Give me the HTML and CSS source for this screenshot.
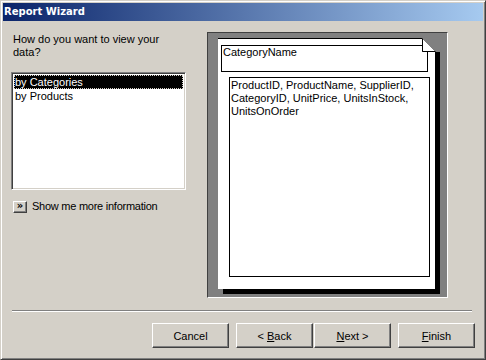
FILE: index.html
```html
<!DOCTYPE html>
<html>
<head>
<meta charset="utf-8">
<link rel="stylesheet" href="styles.css">
</head>
<body>
<div class="window">
  <div class="titlebar"><span class="title">Report Wizard</span></div>
  <div class="main">
    <div class="left">
      <p class="question">How do you want to view your<br>data?</p>
      <div class="listbox">
        <div class="item selected">by Categories</div>
        <div class="item">by Products</div>
      </div>
      <div class="more">
        <span class="more-btn">&raquo;</span>
        <span class="more-text">Show me more information</span>
      </div>
    </div>
    <div class="preview">
      <div class="paper">
        <div class="group-box">CategoryName</div>
        <div class="detail-box">ProductID, ProductName, SupplierID, CategoryID, UnitPrice, UnitsInStock, UnitsOnOrder</div>
        <svg class="fold" width="18" height="14" viewBox="0 0 18 14">
          <rect x="0" y="0" width="18" height="14" fill="#808080"/>
          <polygon points="0,0 13,13 0,13" fill="#ffffff"/>
          <polyline points="0.5,0 0.5,13.5 13.5,13.5" fill="none" stroke="#000" stroke-width="1"/>
          <line x1="0.5" y1="0.5" x2="13" y2="13" stroke="#808080" stroke-width="1"/>
        </svg>
      </div>
    </div>
  </div>
  <div class="separator"></div>
  <div class="buttons">
    <button class="btn">Cancel</button>
    <div class="btn-pair">
      <button class="btn">&lt; <u>B</u>ack</button>
      <button class="btn"><u>N</u>ext &gt;</button>
    </div>
    <button class="btn"><u>F</u>inish</button>
  </div>
</div>
</body>
</html>
```
FILE: styles.css
```css
html, body {
  margin: 0;
  padding: 0;
  background: #d4d0c8;
}
.window {
  width: 486px;
  height: 360px;
  box-sizing: border-box;
  border: 1px solid;
  border-color: #d4d0c8 #404040 #404040 #d4d0c8;
  box-shadow: inset 1px 1px #ffffff, inset -1px -1px #808080;
  padding: 2px;
  background: #d4d0c8;
  font-family: "Liberation Sans", Arial, sans-serif;
  font-size: 11px;
  line-height: 13px;
  color: #000;
}
.titlebar {
  height: 18px;
  background: linear-gradient(to right, #0a246a, #a6caf0);
  display: flex;
  align-items: center;
  padding-left: 1px;
}
.title {
  color: #fff;
  font-family: "DejaVu Sans", sans-serif;
  font-weight: bold;
  font-size: 10px;
  line-height: 14px;
}
.main {
  display: flex;
  padding: 11px 0 0 8px;
}
.left {
  width: 175px;
  display: flex;
  flex-direction: column;
}
.question {
  margin: 1px 0 0 2px;
  line-height: 13px;
}
.listbox {
  margin-top: 13px;
  height: 118px;
  box-sizing: border-box;
  background: #fff;
  border: 1px solid;
  border-color: #808080 #ffffff #ffffff #808080;
  box-shadow: inset 1px 1px #404040, inset -1px -1px #d4d0c8;
  padding: 2px 2px;
}
.item {
  height: 14px;
  line-height: 14px;
  padding-left: 1px;
  white-space: nowrap;
}
.item.selected {
  background: #000;
  color: #fff;
  outline: 1px dotted #d4d0c8;
  outline-offset: -1px;
}
.more {
  margin-top: 10px;
  display: flex;
  align-items: center;
  gap: 5px;
  margin-left: 2px;
}
.more-btn {
  width: 14px;
  height: 12px;
  box-sizing: border-box;
  border: 1px solid;
  border-color: #ffffff #404040 #404040 #ffffff;
  box-shadow: inset -1px -1px #808080;
  font-family: "DejaVu Sans", sans-serif;
  font-weight: bold;
  font-size: 10px;
  line-height: 8px;
  display: flex;
  align-items: center;
  justify-content: center;
  padding-bottom: 1px;
}
.more-text {
  line-height: 13px;
  letter-spacing: -0.25px;
}
.preview {
  margin-left: 21px;
  width: 241px;
  height: 266px;
  box-sizing: border-box;
  border: 1px solid;
  border-color: #404040 #ffffff #ffffff #404040;
  background: #808080;
  padding: 5px 0 0 10px;
}
.paper {
  position: relative;
  width: 217px;
  height: 251px;
  box-sizing: border-box;
  background: #fff;
  border-top: 1px solid #000;
  box-shadow: 5px 5px 0 #000;
  padding-top: 6px;
}
.group-box {
  margin-left: 3px;
  width: 207px;
  height: 27px;
  box-sizing: border-box;
  border: 1px solid #000;
  padding: 0 1px;
}
.detail-box {
  margin: 5px 0 0 11px;
  width: 201px;
  height: 200px;
  box-sizing: border-box;
  border: 1px solid #000;
  padding: 1px 1px;
}
.fold {
  position: absolute;
  top: -1px;
  right: -5px;
  display: block;
}
.separator {
  margin: 12px 0 0 9px;
  width: 460px;
  height: 0;
  border-top: 1px solid #808080;
  border-bottom: 1px solid #ffffff;
}
.buttons {
  margin: 11px 8px 0 0;
  display: flex;
  justify-content: flex-end;
  gap: 7px;
}
.btn-pair {
  display: flex;
  gap: 1px;
}
.btn {
  width: 77px;
  height: 25px;
  box-sizing: border-box;
  margin: 0;
  padding: 0;
  background: #d4d0c8;
  border: 1px solid;
  border-color: #ffffff #404040 #404040 #ffffff;
  box-shadow: inset -1px -1px #808080;
  font-family: "Liberation Sans", Arial, sans-serif;
  font-size: 11px;
  color: #000;
}
```
